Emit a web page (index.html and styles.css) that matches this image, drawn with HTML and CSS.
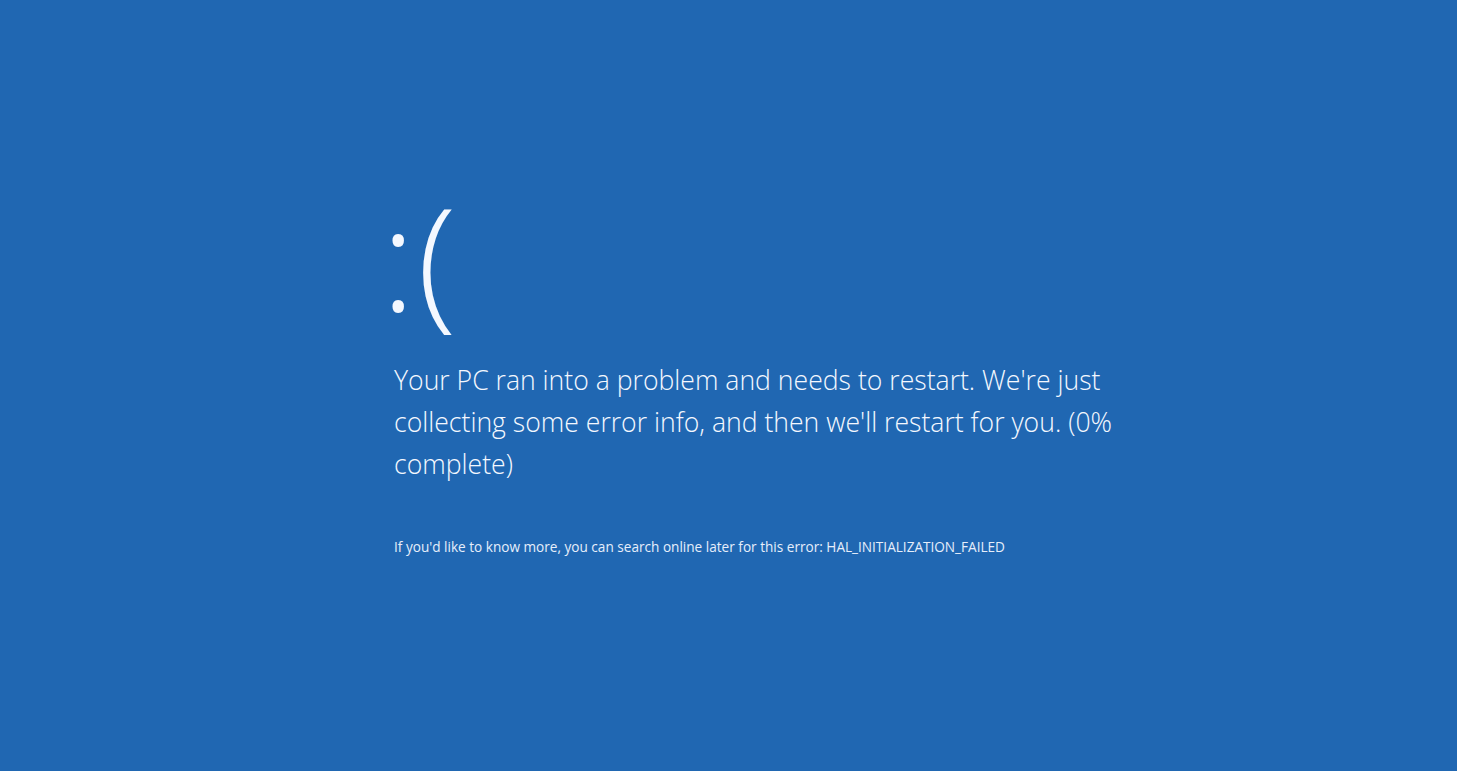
FILE: index.html
```html
<!DOCTYPE html>
<html lang="en">
<head>
<meta charset="utf-8">
<title>Your PC ran into a problem</title>
<link rel="stylesheet" href="styles.css">
</head>
<body>
<main class="screen">
  <div class="face">:(</div>
  <p class="message">Your PC ran into a problem and needs to restart. We're just collecting some error info, and then we'll restart for you. (0% complete)</p>
  <p class="detail">If you'd like to know more, you can search online later for this error: HAL_INITIALIZATION_FAILED</p>
</main>
</body>
</html>
```
FILE: styles.css
```css
html, body {
  margin: 0;
  padding: 0;
  height: 100%;
  background: #2067b2;
}
.screen {
  box-sizing: border-box;
  height: 100%;
  padding: 184px 0 0 394px;
  display: flex;
  flex-direction: column;
  color: #f4f8ff;
  font-family: "Open Sans", "Noto Sans", sans-serif;
}
.face {
  font-size: 144px;
  font-weight: 300;
  line-height: 1;
  margin-left: -13px;
  letter-spacing: 2px;
}
.message {
  margin: 31px 0 0 0;
  width: 760px;
  font-size: 26.6px;
  font-weight: 300;
  line-height: 42px;
}
.detail {
  margin: 52px 0 0 0;
  font-size: 13.6px;
  font-weight: 400;
  line-height: 20px;
  color: #e6eefb;
}
```
